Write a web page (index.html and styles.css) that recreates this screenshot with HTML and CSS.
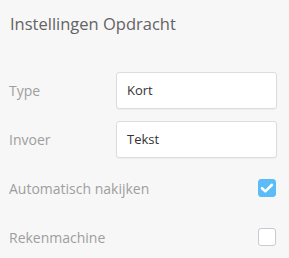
FILE: index.html
```html
<!DOCTYPE html>
<html lang="nl">
<head>
  <meta charset="UTF-8" />
  <title>Instellingen Opdracht</title>
  <link rel="stylesheet" href="styles.css">
</head>
<body>
  <div class="panel">
    <h2 class="title">Instellingen Opdracht</h2>

    <div class="row">
      <span class="label">Type</span>
      <div class="field">Kort</div>
    </div>
    <div class="row">
      <span class="label">Invoer</span>
      <div class="field">Tekst</div>
    </div>

    <div class="row check-row">
      <span class="label">Automatisch nakijken</span>
      <span class="box checked">
        <svg viewBox="0 0 18 18" width="18" height="18"><path d="M4 9.2l3.3 3.2L14 5.8" fill="none" stroke="#fff" stroke-width="2.6" stroke-linecap="round" stroke-linejoin="round"/></svg>
      </span>
    </div>
    <div class="row check-row">
      <span class="label">Rekenmachine</span>
      <span class="box"></span>
    </div>
  </div>
</body>
</html>
```

FILE: styles.css
```css
body {
  margin: 0;
  background: #f7f7f7;
  font-family: 'Open Sans', sans-serif;
}
.panel {
  padding: 13px 12px 0 9px;
}
.title {
  margin: 0 0 0 1px;
  font-size: 16.5px;
  font-weight: 400;
  color: #636363;
  line-height: 22px;
}
.row {
  display: flex;
  align-items: center;
  justify-content: space-between;
}
.row:nth-of-type(1) {
  margin-top: 37px;
}
.row + .row {
  margin-top: 12px;
}
.label {
  font-size: 14px;
  color: #9e9e9e;
}
.field {
  width: 149px;
  height: 35px;
  line-height: 35px;
  padding-left: 10px;
  background: #fff;
  border: 1px solid #dcdcdc;
  border-radius: 3px;
  box-shadow: 0 1px 1px rgba(0, 0, 0, 0.04);
  font-size: 13px;
  color: #333;
}
.check-row {
  height: 18px;
  padding-right: 1px;
}
.row.check-row {
  margin-top: 21px;
}
.row.check-row + .check-row {
  margin-top: 31px;
}
.box {
  width: 16px;
  height: 16px;
  border: 1px solid #c6ccd2;
  border-radius: 3px;
  background: #fff;
  display: flex;
}
.box.checked {
  background: #5bbcf7;
  border-color: #5bbcf7;
}
.box svg {
  margin: -1px;
}
```
